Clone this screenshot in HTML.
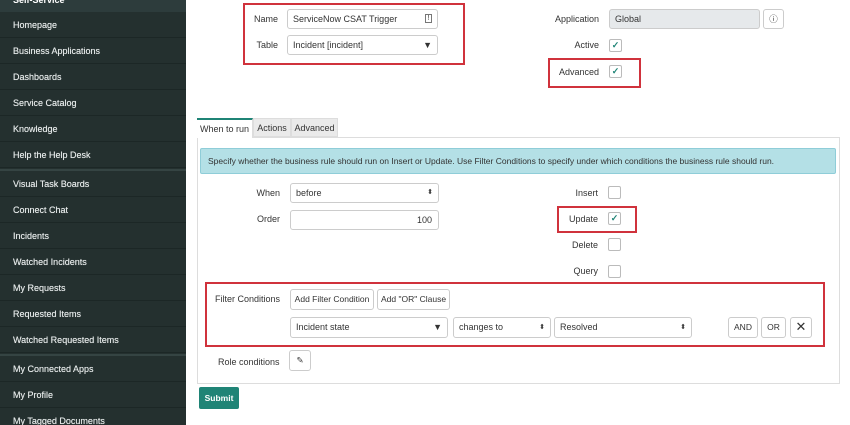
<!DOCTYPE html>
<html><head><style>
*{box-sizing:border-box;margin:0;padding:0}
body{width:850px;height:425px;overflow:hidden;background:#fff;font-family:"Liberation Sans",sans-serif;font-size:9px;color:#333;position:relative}
.a{position:absolute}
#sb{left:0;top:0;width:186px;height:425px;background:#24302f;overflow:hidden}
.it{position:absolute;left:0;width:186px;height:26px;border-bottom:1px solid #1c2726;color:#e4e8e8;font-size:9px;padding-left:13px;line-height:26px;font-weight:normal;text-shadow:0 0 0.4px #e4e8e8}
.sep{position:absolute;left:0;width:186px;height:2px;background:#354443}
.inp{position:absolute;border:1px solid #ccc;border-radius:3px;background:#fff;height:20px;line-height:18px;padding-left:5px;font-size:9px}
.lbl{position:absolute;text-align:right;font-size:9px}
.cb{position:absolute;width:13px;height:13px;border:1px solid #bbb;border-radius:2px;background:#fff;color:#1f8476;font-size:9px;line-height:11px;text-align:center;font-weight:bold}
.red{position:absolute;border:2px solid #d0323c}
.btn{position:absolute;border:1px solid #ccc;border-radius:3px;background:#fff;height:21px;line-height:19px;text-align:center;font-size:8.5px}
.ar{position:absolute;right:5px;top:0;font-size:7px}
</style></head><body>
<div id="sb" class="a">
<div class="a" style="left:0;top:0;width:186px;height:12px;background:#2d3c3c;color:#fff;font-weight:bold;font-size:9px;padding-left:13px;line-height:0px">Self-Service</div>
<div class="it" style="top:12px">Homepage</div>
<div class="it" style="top:38px">Business Applications</div>
<div class="it" style="top:64px">Dashboards</div>
<div class="it" style="top:90px">Service Catalog</div>
<div class="it" style="top:116px">Knowledge</div>
<div class="it" style="top:142px">Help the Help Desk</div>
<div class="sep" style="top:169px"></div>
<div class="it" style="top:171px">Visual Task Boards</div>
<div class="it" style="top:197px">Connect Chat</div>
<div class="it" style="top:223px">Incidents</div>
<div class="it" style="top:249px">Watched Incidents</div>
<div class="it" style="top:275px">My Requests</div>
<div class="it" style="top:301px">Requested Items</div>
<div class="it" style="top:327px">Watched Requested Items</div>
<div class="sep" style="top:354px"></div>
<div class="it" style="top:356px">My Connected Apps</div>
<div class="it" style="top:382px">My Profile</div>
<div class="it" style="top:408px">My Tagged Documents</div>
</div>

<div class="red" style="left:243px;top:3px;width:222px;height:62px"></div>
<div class="lbl" style="left:230px;width:48px;top:14px">Name</div>
<div class="inp" style="left:287px;top:9px;width:151px">ServiceNow CSAT Trigger<span class="ar" style="border:1px solid #777;width:7px;height:9px;top:4px;line-height:7px;text-align:center">!</span></div>
<div class="lbl" style="left:230px;width:48px;top:40px">Table</div>
<div class="inp" style="left:287px;top:35px;width:151px">Incident [incident]<span class="ar" style="font-size:9px">▼</span></div>

<div class="lbl" style="left:540px;width:59px;top:14px">Application</div>
<div class="inp" style="left:609px;top:9px;width:151px;background:#e6e9eb">Global</div>
<div class="btn" style="left:763px;top:9px;width:21px;height:20px;line-height:18px">ⓘ</div>
<div class="lbl" style="left:540px;width:59px;top:40px">Active</div>
<div class="cb" style="left:609px;top:39px">✓</div>
<div class="red" style="left:548px;top:58px;width:93px;height:30px"></div>
<div class="lbl" style="left:540px;width:59px;top:67px">Advanced</div>
<div class="cb" style="left:609px;top:65px">✓</div>

<div class="a" style="left:197px;top:137px;width:643px;height:247px;border:1px solid #ddd"></div>
<div class="a" style="left:197px;top:118px;width:56px;height:20px;border-top:2px solid #1f8476;background:#fff;border-right:1px solid #ddd;line-height:18px;text-align:center">When to run</div>
<div class="a" style="left:253px;top:118px;width:38px;height:19px;background:#eaeaea;border:1px solid #ddd;line-height:18px;text-align:center">Actions</div>
<div class="a" style="left:291px;top:118px;width:47px;height:19px;background:#eaeaea;border:1px solid #ddd;line-height:18px;text-align:center">Advanced</div>
<div class="a" style="left:200px;top:148px;width:636px;height:26px;background:#b4e0e6;border:1px solid #8fcdd8;border-radius:2px;line-height:24px;padding-left:7px;font-size:8.5px">Specify whether the business rule should run on Insert or Update. Use Filter Conditions to specify under which conditions the business rule should run.</div>

<div class="lbl" style="left:230px;width:50px;top:188px">When</div>
<div class="inp" style="left:290px;top:183px;width:149px">before<span class="ar">⬍</span></div>
<div class="lbl" style="left:230px;width:50px;top:214px">Order</div>
<div class="inp" style="left:290px;top:210px;width:149px;text-align:right;padding-right:6px">100</div>
<div class="lbl" style="left:540px;width:58px;top:188px">Insert</div>
<div class="cb" style="left:608px;top:186px"></div>
<div class="red" style="left:557px;top:206px;width:80px;height:27px"></div>
<div class="lbl" style="left:540px;width:58px;top:214px">Update</div>
<div class="cb" style="left:608px;top:212px">✓</div>
<div class="lbl" style="left:540px;width:58px;top:240px">Delete</div>
<div class="cb" style="left:608px;top:238px"></div>
<div class="lbl" style="left:540px;width:58px;top:266px">Query</div>
<div class="cb" style="left:608px;top:265px"></div>

<div class="red" style="left:205px;top:282px;width:620px;height:65px"></div>
<div class="a" style="left:215px;top:294px">Filter Conditions</div>
<div class="btn" style="left:290px;top:289px;width:84px">Add Filter Condition</div>
<div class="btn" style="left:377px;top:289px;width:73px">Add "OR" Clause</div>
<div class="inp" style="left:290px;top:317px;width:158px;height:21px;line-height:19px">Incident state<span class="ar" style="font-size:9px">▼</span></div>
<div class="inp" style="left:453px;top:317px;width:98px;height:21px;line-height:19px">changes to<span class="ar">⬍</span></div>
<div class="inp" style="left:554px;top:317px;width:138px;height:21px;line-height:19px">Resolved<span class="ar">⬍</span></div>
<div class="btn" style="left:728px;top:317px;width:30px">AND</div>
<div class="btn" style="left:761px;top:317px;width:25px">OR</div>
<div class="btn" style="left:790px;top:317px;width:22px;font-size:13px;line-height:18px">✕</div>

<div class="a" style="left:218px;top:357px">Role conditions</div>
<div class="btn" style="left:289px;top:350px;width:22px">✎</div>
<div class="a" style="left:199px;top:387px;width:40px;height:22px;background:#1f8476;border-radius:2px;color:#fff;font-weight:bold;text-align:center;line-height:22px;font-size:8.5px">Submit</div>
</body></html>
